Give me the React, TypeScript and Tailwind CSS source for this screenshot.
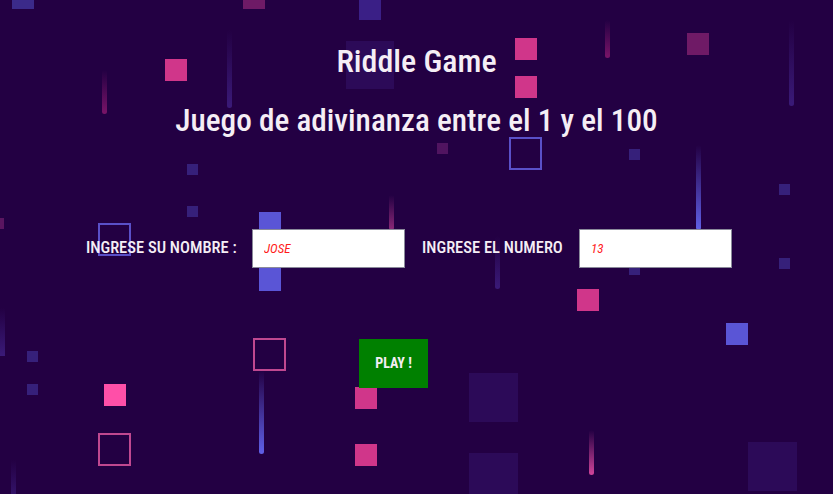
import React from "react";

function Background() {
  return (
    <svg className="absolute inset-0 h-full w-full" width="833" height="494" viewBox="0 0 833 494" preserveAspectRatio="xMinYMin slice">
      <defs>
        <linearGradient id="gPink" x1="0" y1="0" x2="0" y2="1">
          <stop offset="0" stopColor="#d0449a" stopOpacity="0" />
          <stop offset="1" stopColor="#d0449a" />
        </linearGradient>
        <linearGradient id="gPinkDim" x1="0" y1="0" x2="0" y2="1">
          <stop offset="0" stopColor="#7a1468" stopOpacity="0" />
          <stop offset="1" stopColor="#7a1468" />
        </linearGradient>
        <linearGradient id="gBlue" x1="0" y1="0" x2="0" y2="1">
          <stop offset="0" stopColor="#6060e8" stopOpacity="0" />
          <stop offset="1" stopColor="#6060e8" />
        </linearGradient>
        <linearGradient id="gPurple" x1="0" y1="0" x2="0" y2="1">
          <stop offset="0" stopColor="#3a1a78" stopOpacity="0" />
          <stop offset="1" stopColor="#3a1a78" />
        </linearGradient>
      </defs>
      {/* filled squares */}
      <rect x="12" y="0" width="22" height="9" fill="#3b2a8a" />
      <rect x="243" y="0" width="22" height="9" fill="#6e1a66" />
      <rect x="359" y="0" width="22" height="20" fill="#3a1f86" />
      <rect x="346" y="41" width="48" height="48" fill="#2c0a58" />
      <rect x="165" y="59" width="22" height="22" fill="#d0368a" />
      <rect x="515" y="38" width="22" height="22" fill="#d0368a" />
      <rect x="515" y="76" width="22" height="22" fill="#d0368a" />
      <rect x="687" y="33" width="22" height="22" fill="#6f1a66" />
      <rect x="437" y="143" width="11" height="11" fill="#501460" />
      <rect x="629" y="149" width="11" height="11" fill="#36207a" />
      <rect x="187" y="164" width="11" height="11" fill="#36207a" />
      <rect x="187" y="206" width="11" height="11" fill="#36207a" />
      <rect x="779" y="184" width="11" height="11" fill="#36207a" />
      <rect x="779" y="258" width="11" height="11" fill="#36207a" />
      <rect x="629" y="265" width="11" height="10" fill="#36207a" />
      <rect x="0" y="218" width="4" height="11" fill="#5a1560" />
      <rect x="259" y="212" width="22" height="79" fill="#5a55d6" />
      <rect x="577" y="289" width="22" height="22" fill="#d0368a" />
      <rect x="726" y="323" width="22" height="22" fill="#5a55d6" />
      <rect x="27" y="351" width="11" height="11" fill="#36207a" />
      <rect x="27" y="384" width="11" height="11" fill="#36207a" />
      <rect x="104" y="384" width="22" height="22" fill="#ff4fa8" />
      <rect x="355" y="387" width="22" height="22" fill="#d0368a" />
      <rect x="355" y="444" width="22" height="22" fill="#d0368a" />
      <rect x="469" y="373" width="49" height="49" fill="#2c0a58" />
      <rect x="469" y="453" width="49" height="49" fill="#2c0a58" />
      <rect x="748" y="442" width="49" height="49" fill="#2c0a58" />
      {/* outlined squares */}
      <rect x="510" y="138" width="31" height="31" fill="none" stroke="#5a50c8" strokeWidth="2" />
      <rect x="99" y="224" width="31" height="31" fill="none" stroke="#5a50c8" strokeWidth="2" />
      <rect x="254" y="339" width="31" height="31" fill="none" stroke="#c04890" strokeWidth="2" />
      <rect x="99" y="434" width="31" height="31" fill="none" stroke="#c04890" strokeWidth="2" />
      {/* falling streaks */}
      <rect x="102" y="70" width="5" height="44" rx="2.5" fill="url(#gPinkDim)" />
      <rect x="227" y="30" width="5" height="78" rx="2.5" fill="url(#gPurple)" />
      <rect x="605" y="20" width="5" height="38" rx="2.5" fill="url(#gPinkDim)" />
      <rect x="789" y="20" width="5" height="86" rx="2.5" fill="url(#gPurple)" />
      <rect x="696" y="145" width="5" height="85" rx="2.5" fill="url(#gBlue)" />
      <rect x="389" y="195" width="5" height="35" rx="2.5" fill="url(#gPink)" opacity="0.6" />
      <rect x="495" y="236" width="5" height="53" rx="2.5" fill="url(#gPurple)" />
      <rect x="0" y="308" width="5" height="48" fill="url(#gPurple)" />
      <rect x="259" y="370" width="5" height="84" rx="2.5" fill="url(#gBlue)" />
      <rect x="589" y="430" width="5" height="45" rx="2.5" fill="url(#gPink)" />
      <rect x="11" y="460" width="5" height="34" fill="url(#gPurple)" opacity="0.7" />
    </svg>
  );
}

function Field({ label, value, labelWidth }: { label: string; value: string; labelWidth: string }) {
  return (
    <div className="flex items-center gap-[16px]">
      <label className={`${labelWidth} whitespace-nowrap text-[16.5px] font-medium`}>{label}</label>
      <input
        readOnly
        value={value}
        className="h-[39px] w-[153px] border border-[#8a8a9a] bg-white pl-[11px] text-[13px] italic text-[#ff1a1a] outline-none"
      />
    </div>
  );
}

export default function App() {
  return (
    <div className="relative h-[494px] w-full overflow-hidden bg-[#230043] font-['Roboto_Condensed',sans-serif] text-[#f5eef5]">
      <Background />

      <main className="relative flex flex-col pt-[43px]">
        <header className="flex flex-col items-center gap-[22px]">
          <h1 className="text-[32px] leading-[37px] font-medium">Riddle Game</h1>
          <h2 className="text-[31.25px] leading-[37px] font-medium">Juego de adivinanza entre el 1 y el 100</h2>
        </header>

        <form className="mt-[90px] flex flex-col gap-[71px]">
          <div className="flex items-center gap-[17px] pl-[86px]">
            <Field label="INGRESE SU NOMBRE :" value="JOSE" labelWidth="w-[150px]" />
            <Field label="INGRESE EL NUMERO" value="13" labelWidth="w-[141px]" />
          </div>
          <div className="pl-[359px]">
            <button type="button" className="h-[49px] w-[69px] bg-[#008000] text-[14px] font-bold text-[#f5eef5]">
              PLAY !
            </button>
          </div>
        </form>
      </main>
    </div>
  );
}
